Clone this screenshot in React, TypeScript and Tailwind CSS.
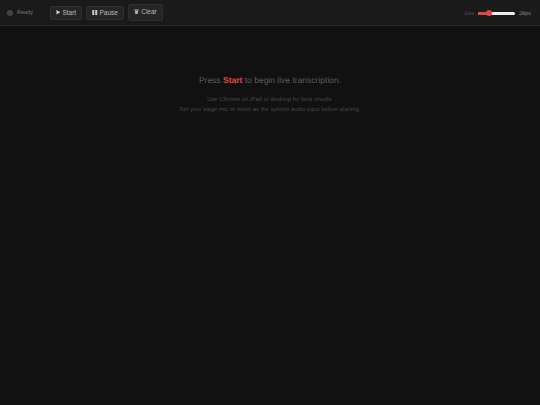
export default function App() {
  return (
    <div className="min-h-screen bg-[#111111] font-['Liberation_Sans',Arial,sans-serif] [text-rendering:geometricPrecision]">
      <header className="h-[26px] bg-[#1a1a1a] border-b border-[#2a2a2a] flex items-center pl-[7px] pr-[9px]">
        <span className="w-[6px] h-[6px] rounded-full bg-[#444444]" />
        <span className="ml-[4px] mt-[3px] text-[5.5px] leading-none text-[#777777] w-[19px]">Ready</span>
        <div className="ml-[14px] flex items-center gap-[4px]">
          <button className="h-[14px] w-[32px] rounded-[2px] bg-[#252525] border border-[#2f2f2f] text-[6.5px] leading-none text-[#bbbbbb] flex items-center justify-center gap-[2px]">
            <svg viewBox="0 0 10 10" className="w-[4.5px] h-[4.5px]"><path d="M1 0l9 5-9 5z" fill="#cccccc" /></svg>
            <span className="mt-[1.5px]">Start</span>
          </button>
          <button className="h-[14px] w-[38px] rounded-[2px] bg-[#252525] border border-[#2f2f2f] text-[6.5px] leading-none text-[#bbbbbb] flex items-center justify-center gap-[2px]">
            <svg viewBox="0 0 10 10" className="w-[5.5px] h-[5px]"><path d="M0 0h4v10H0zM6 0h4v10H6z" fill="#cccccc" /></svg>
            <span className="mt-[1.5px]">Pause</span>
          </button>
          <button className="h-[17px] w-[35px] -mt-[1px] rounded-[2px] bg-[#252525] border border-[#2f2f2f] text-[6.5px] leading-none text-[#bbbbbb] flex items-center justify-center gap-[2px] pb-[1px]">
            <svg viewBox="0 0 10 10" className="w-[5px] h-[5px]"><path d="M0 1h10v1.5H0zM1.5 3h7L7.5 10h-5z" fill="#aaaaaa" /></svg>
            <span className="mt-[1px]">Clear</span>
          </button>
        </div>
        <div className="ml-auto flex items-center">
          <span className="mt-[3px] text-[5px] leading-none text-[#555555]">Size</span>
          <div className="ml-[4px] mt-[1px] w-[37px] h-[3px] rounded-full bg-[#eeeeee] flex items-center">
            <div className="w-[9px] h-[3px] rounded-l-full bg-[#e0483e]" />
            <div className="-ml-[1px] w-[6px] h-[6px] rounded-full bg-[#e0483e]" />
          </div>
          <span className="ml-[4px] mt-[4px] text-[5.5px] leading-none text-[#888888]">28px</span>
        </div>
      </header>
      <main className="flex flex-col items-center pt-[48px]">
        <p className="text-[8.5px] leading-[13px] text-[#5c5c5c]">
          Press <strong className="text-[#e0483e] font-bold">Start</strong> to begin live transcription.
        </p>
        <p className="mt-[7.5px] text-[5.9px] leading-[10px] text-[#484848] text-center">
          Use Chrome on iPad or desktop for best results.
          <br />
          Set your stage mic or mixer as the system audio input before starting.
        </p>
      </main>
    </div>
  );
}
